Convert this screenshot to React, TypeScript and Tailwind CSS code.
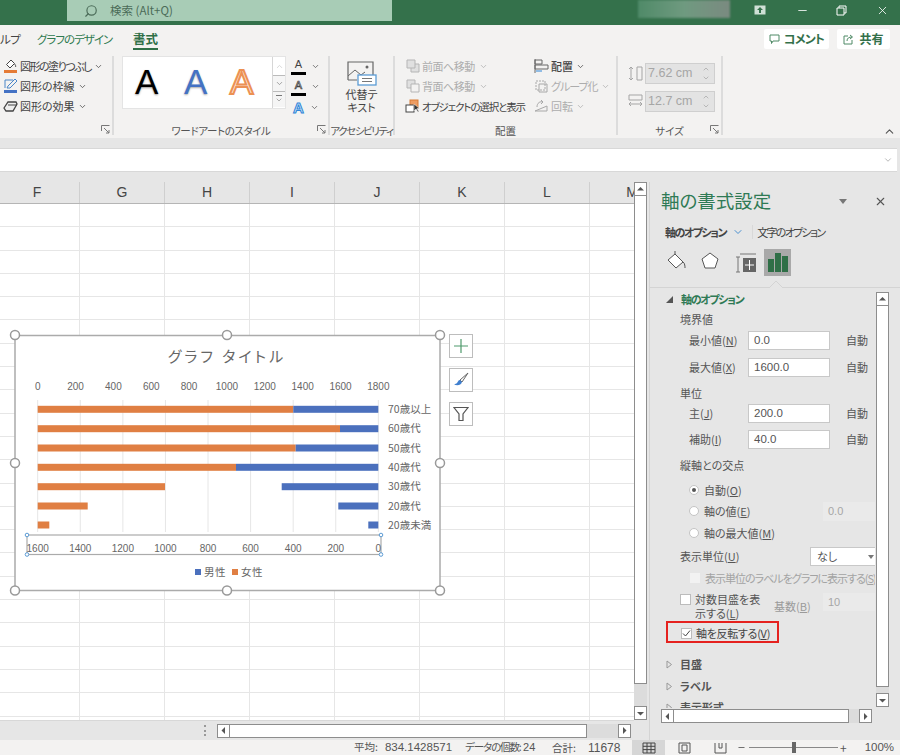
import type { ReactNode } from 'react';
import { ChevronDown, ChevronUp, Minus, Search, X } from 'lucide-react';

const columns = ['F', 'G', 'H', 'I', 'J', 'K', 'L', 'M'];
const rows = Array.from({ length: 23 }, (_, i) => i);

const bars = [
  { label: '70歳以上', y: 409.3, orange: 293.3, blue: 293.3 },
  { label: '60歳代', y: 428.7, orange: 340, blue: 340 },
  { label: '50歳代', y: 448, orange: 295.7, blue: 295.7 },
  { label: '40歳代', y: 467.3, orange: 236, blue: 236 },
  { label: '30歳代', y: 486.7, orange: 165, blue: 281.7 },
  { label: '20歳代', y: 506, orange: 87.7, blue: 338.3 },
  { label: '20歳未満', y: 525, orange: 49.3, blue: 368.3 },
];

function Caret({ className = 'text-[#555]' }: { className?: string }) {
  return <ChevronDown size={9} strokeWidth={2} className={`shrink-0 ${className}`} />;
}

function Launcher() {
  return (
    <svg width="9" height="9" viewBox="0 0 9 9" className="absolute right-[2px] bottom-[1px]" fill="none" stroke="#777">
      <path d="M.5 6V.5H8.5M3 3l5 5M8 5v3H5" />
    </svg>
  );
}

function RibbonRow({ icon, children, muted, caret }: { icon: ReactNode; children: ReactNode; muted?: boolean; caret?: boolean }) {
  return (
    <div className={`flex h-[20px] items-center gap-[2px] whitespace-nowrap ${muted ? 'text-[#adadad]' : 'text-[#444]'}`}>
      <span className="flex w-[15px] shrink-0 justify-center">{icon}</span>
      <span>{children}</span>
      {caret && <Caret className={muted ? 'text-[#adadad] ml-[1px]' : 'text-[#444] ml-[1px]'} />}
    </div>
  );
}

function GroupLabel({ children }: { children: ReactNode }) {
  return <div className="absolute inset-x-0 bottom-[-3px] text-center text-[10.5px] leading-[14px] whitespace-nowrap text-[#555]">{children}</div>;
}

function AngleUpDown() {
  return (
    <span className="flex flex-col text-[#a0a0a0]">
      <ChevronUp size={8} />
      <ChevronDown size={8} className="mt-[1px]" />
    </span>
  );
}

function SizeField({ value, icon }: { value: string; icon: ReactNode }) {
  return (
    <div className="flex items-center gap-[2px]">
      <span className="flex w-[16px] justify-center">{icon}</span>
      <div className="flex h-[21px] w-[70px] items-center justify-between border border-[#cfcfcf] bg-[#e3e3e3] pl-[2px] pr-[4px] font-['Liberation_Sans',sans-serif] text-[12.5px] text-[#a6a6a6]">
        {value}
        <AngleUpDown />
      </div>
    </div>
  );
}

function Ribbon() {
  return (
    <div className="relative h-[113px] shrink-0 bg-[#f3f2f1] text-[11px]">
      <div className="flex h-[25px] items-end text-[11.5px]">
        <span className="w-[37px] pb-[2px] tracking-[-0.5px] text-[#444]">ルプ</span>
        <span className="w-[96px] pb-[2px] tracking-[-1px] text-[#2f7a50]">グラフのデザイン</span>
        <span className="border-b-[2px] border-[#2f6f47] text-[12.5px] leading-[19px] font-bold text-[#2f6f47]">書式</span>
      </div>
      <div className="absolute top-[4px] right-[10px] flex gap-[8px] text-[12px] font-bold text-[#33704a]">
        <div className="flex h-[20px] w-[65px] items-center justify-center gap-[4px] rounded-[2px] bg-white tracking-[-0.8px]">
          <svg width="11" height="11" viewBox="0 0 11 11" fill="none" stroke="#4f8a66"><path d="M1 1h9v6H4L2.500 9.500V7H1z" /></svg>
          コメント
        </div>
        <div className="flex h-[20px] w-[53px] items-center justify-center gap-[5px] rounded-[2px] bg-white">
          <svg width="11" height="11" viewBox="0 0 11 11" fill="none" stroke="#4f8a66"><path d="M5 2H1v8h8V6M4 7c0-3 2-4 5-4M7 1l2.500 2L7 5" /></svg>
          共有
        </div>
      </div>

      <div className="mt-[6px] flex h-[79px] items-stretch">
        <div className="relative w-[114px] shrink-0 border-r-[2px] border-[#dcdcdc] pl-[3px]">
          <RibbonRow caret icon={<svg width="15" height="15" viewBox="0 0 15 15"><path d="M8 1l3.500 3.500L7 9 3.500 5.500z" fill="#fff" stroke="#444" /><path d="M11.500 5c1 1 1.500 2 1 3" fill="none" stroke="#444" /><rect x="1" y="11" width="13" height="3" fill="#e57b35" /></svg>}><span className="tracking-[-1.500px]">図形の塗りつぶし</span></RibbonRow>
          <RibbonRow caret icon={<svg width="15" height="16" viewBox="0 0 15 16"><path d="M2 10V2h8M4 10l1-2 7-7 2 2-7 7z" fill="none" stroke="#4a86c8" /><rect x="1" y="12" width="13" height="3" fill="#4472c4" /></svg>}>図形の枠線</RibbonRow>
          <RibbonRow caret icon={<svg width="15" height="13" viewBox="0 0 15 13"><path d="M1 8l4-6h8l1 2-4 7H3z" fill="#eee" stroke="#444" strokeWidth="1.300" /><path d="M5 5h9" stroke="#444" /></svg>}>図形の効果</RibbonRow>
          <Launcher />
        </div>

        <div className="relative w-[216px] shrink-0 border-r-[2px] border-[#dcdcdc]">
          <div className="ml-[8px] flex h-[53px] w-[164px] border-[1.5px] border-[#e4e4e4] bg-white font-['Liberation_Sans',sans-serif] text-[35px] leading-[50px]">
            <span className="w-[50px] pl-[12px] text-black [text-shadow:0_1px_2px_#999]">A</span>
            <span className="w-[49px] pl-[11px] text-[#4472c4] [text-shadow:0_1px_2px_#aaa]">A</span>
            <span className="w-[50px] pl-[8px] text-[#fbe5d6] [-webkit-text-stroke:2px_#ec9153]">A</span>
            <div className="flex w-[13px] flex-col border-l border-[#d6d6d6] text-[#888]">
              <div className="flex h-[18px] items-center justify-center"><ChevronUp size={9} className="text-[#ccc]" /></div>
              <div className="flex h-[17px] items-center justify-center border-y border-[#bbb] bg-[#f5f5f5]"><ChevronDown size={9} /></div>
              <div className="flex h-[15px] flex-col items-center justify-center bg-[#f5f5f5]"><span className="h-[1px] w-[6px] bg-[#777]" /><ChevronDown size={8} /></div>
            </div>
          </div>
          <div className="absolute top-[0px] left-[177px] flex flex-col font-['Liberation_Sans',sans-serif] text-[11px] leading-[15px]">
            <div className="flex h-[20px] items-center gap-[5px]"><span className="w-[15px] border-b-[3px] border-black text-center text-[#444]">A</span><Caret /></div>
            <div className="flex h-[21px] items-center gap-[5px]"><span className="w-[15px] border-b-[3px] border-black text-center text-[#eee] [-webkit-text-stroke:0.700px_#444]">A</span><Caret /></div>
            <div className="flex h-[20px] items-center gap-[4px]"><span className="w-[15px] text-center text-[15px] font-bold text-[#cfe4f7] [-webkit-text-stroke:1px_#2f86d8]">A</span><Caret /></div>
          </div>
          <GroupLabel><span className="tracking-[-0.4px]">ワードアートのスタイル</span></GroupLabel>
          <Launcher />
        </div>

        <div className="relative w-[65px] shrink-0 border-r-[2px] border-[#dcdcdc] text-center leading-[13px] text-[#444]">
          <svg width="30" height="25" viewBox="0 0 30 25" className="mx-auto mt-[5px] mb-[2px]" fill="none">
            <path d="M1 19V1h25v13" stroke="#666" strokeWidth="1.200" />
            <path d="M1 15l7-6 6 5 4-3M1 19h9" stroke="#666" />
            <circle cx="20" cy="6" r="1.500" fill="#666" />
            <rect x="11" y="14" width="18" height="10" fill="#fff" stroke="#5b9bd5" strokeWidth="1.300" />
            <path d="M15 17.500h10M15 20.500h10" stroke="#777" />
          </svg>
          <div>代替テ</div>
          <div>キスト</div>
          <GroupLabel><span className="tracking-[-1.400px]">アクセシビリティ</span></GroupLabel>
        </div>

        <div className="relative flex w-[223px] shrink-0 border-r-[2px] border-[#dcdcdc] pl-[10px]">
          <div className="w-[129px]">
            <RibbonRow muted caret icon={<svg width="14" height="14" viewBox="0 0 14 14" fill="#e0e0e0" stroke="#b5b5b5"><path d="M5 5h8v8H5z" /><path d="M1 1h8v8H1z" /></svg>}><span className="mr-[1px] tracking-[-0.5px]">前面へ移動</span></RibbonRow>
            <RibbonRow muted caret icon={<svg width="14" height="14" viewBox="0 0 14 14" fill="#e0e0e0" stroke="#b5b5b5"><path d="M1 1h8v8H1z" /><path d="M5 5h8v8H5z" fill="#f3f2f1" /></svg>}><span className="mr-[1px] tracking-[-0.5px]">背面へ移動</span></RibbonRow>
            <RibbonRow icon={<svg width="15" height="14" viewBox="0 0 15 14"><rect x="5" y="1" width="8" height="8" fill="#ed9c62" stroke="#d97c36" /><rect x="1" y="6" width="8" height="7" fill="#fff" stroke="#444" /><path d="M9 5v7l2-2 2 3 1-.5-2-3h2.500z" fill="#333" stroke="#fff" strokeWidth=".5" /></svg>}><span className="text-[10.5px] tracking-[-1.150px]">オブジェクトの選択と表示</span></RibbonRow>
          </div>
          <div>
            <RibbonRow caret icon={<svg width="15" height="16" viewBox="0 0 15 16" fill="none" stroke="#666"><path d="M1 1v14" /><path d="M1 2h7v4H1zM1 7h13v4H1z" /><path d="M2 13h6" stroke="#2f86d8" /></svg>}><span className="font-medium">配置</span></RibbonRow>
            <RibbonRow muted caret icon={<svg width="15" height="15" viewBox="0 0 15 15" fill="none" stroke="#a8a8a8"><path d="M2 2h9v9H2z" strokeDasharray="2 1" /><path d="M5 5h8v8H5z" /></svg>}><span className="tracking-[-1px]">グループ化</span></RibbonRow>
            <RibbonRow muted caret icon={<svg width="15" height="14" viewBox="0 0 15 14" fill="none" stroke="#a8a8a8"><path d="M1 12l12-5v5zM3 8c0-4 3-6 6-5M7 1l2 2-2 2" /></svg>}>回転</RibbonRow>
          </div>
          <GroupLabel>配置</GroupLabel>
        </div>

        <div className="relative flex w-[105px] shrink-0 flex-col gap-[7px] border-r-[2px] border-[#dcdcdc] pt-[7px] pl-[9px]">
          <SizeField value="7.62 cm" icon={<svg width="15" height="15" viewBox="0 0 15 15" fill="none" stroke="#a5a5a5"><path d="M9 1h5v13H9zM3 1v13M1 3l2-2 2 2M1 12l2 2 2-2" /></svg>} />
          <SizeField value="12.7 cm" icon={<svg width="15" height="15" viewBox="0 0 15 15" fill="none" stroke="#a5a5a5"><path d="M1 1h13v5H1zM1 10h13M3 8l-2 2 2 2M12 8l2 2-2 2" /></svg>} />
          <GroupLabel>サイズ</GroupLabel>
          <Launcher />
        </div>
      </div>
      <ChevronUp size={13} className="absolute right-[4px] bottom-[0px] text-[#555]" />
    </div>
  );
}

function Sheet() {
  return (
    <div className="relative flex w-[634px] shrink-0 flex-col overflow-hidden">
      <div className="ml-[-5px] flex h-[22px] shrink-0 border-b border-[#b5b5b5] bg-[#e6e6e6] font-['Liberation_Sans',sans-serif] text-[14px] text-[#444]">
        {columns.map((c) => (
          <div key={c} className="flex w-[85px] shrink-0 items-center justify-center border-r border-[#cfcfcf]">
            {c}
          </div>
        ))}
      </div>
      <div className="h-[516px] shrink-0 overflow-hidden bg-white">
        {rows.map((r) => (
          <div key={r} className="ml-[-5px] flex h-[23.300px]">
            {columns.map((c) => (
              <div key={c} className="w-[85px] shrink-0 border-r border-b border-[#e6e6e6]" />
            ))}
          </div>
        ))}
      </div>
      <div className="flex h-[20px] shrink-0 items-center border-t border-[#d8d8d8] bg-[#e6e6e6]">
        <span className="ml-[204px] h-[11px] w-[2px] border-l-2 border-dotted border-[#999]" />
        <ArrowBox dir="left" className="ml-[11px]" />
        <div className="h-[14px] w-[357px] border-y border-r border-[#8d8d8d] bg-white" />
        <div className="h-[14px] w-[31px] bg-[#dcdcdc]" />
        <ArrowBox dir="right" />
      </div>
      <Chart />
    </div>
  );
}

function ArrowBox({ dir, className = '' }: { dir: 'up' | 'down' | 'left' | 'right'; className?: string }) {
  const path = { up: 'M1 5.500L4.500 2 8 5.500z', down: 'M1 3L4.500 6.500 8 3z', left: 'M6 1L2.500 4.500 6 8z', right: 'M3 1l3.500 3.500L3 8z' }[dir];
  return (
    <span className={`flex h-[14px] w-[13px] shrink-0 items-center justify-center border border-[#8d8d8d] bg-white ${className}`}>
      <svg width="9" height="9" viewBox="0 0 9 9"><path d={path} fill="#555" /></svg>
    </span>
  );
}

function Chart() {
  const gridXs = Array.from({ length: 9 }, (_, i) => 37.7 + i * 42.58);
  const topTicks = Array.from({ length: 10 }, (_, i) => i * 200);
  const handles = [[15, 335], [227, 335], [440, 335], [15, 463], [440, 463], [15, 590.500], [227, 590.500], [440, 590.500]];
  const blueHandles = [[27, 535], [381, 535], [27, 554.500], [381, 554.500]];
  return (
    <>
      <svg
        width="445"
        height="272"
        viewBox="5 327 445 272"
        className="absolute top-[145px] left-[5px] font-['Noto_Sans_CJK_JP',sans-serif]"
      >
        <rect x="15" y="335.500" width="425" height="255" fill="#fff" stroke="#ababab" strokeWidth="1.500" />
        <text x="227" y="362" textAnchor="middle" fontSize="15" letterSpacing="3" fill="#666">グラフ タイトル</text>
        {gridXs.map((x) => (
          <line key={x} x1={x} x2={x} y1="400" y2="532" stroke="#e6e6e6" />
        ))}
        {topTicks.map((t, i) => (
          <text key={t} x={37.7 + i * 37.85} y="389.500" textAnchor="middle" fontSize="10" fill="#666" fontFamily="'Liberation Sans',sans-serif">{t}</text>
        ))}
        {bars.map((b) => (
          <g key={b.label}>
            <rect x="37.700" y={b.y - 3.5} width={b.orange - 37.7} height="7" fill="#e07f43" />
            <rect x={b.blue} y={b.y - 3.5} width={378.3 - b.blue} height="7" fill="#4b70bd" />
            <text x="388" y={b.y + 3.5} fontSize="10.500" fill="#666" style={{ fontFeatureSettings: "'palt'" }}>{b.label}</text>
          </g>
        ))}
        <rect x="27" y="535" width="354" height="19.500" fill="none" stroke="#ababab" strokeWidth="1.200" />
        {[1600, 1400, 1200, 1000, 800, 600, 400, 200, 0].map((t, i) => (
          <text key={t} x={37.7 + i * 42.58} y="551.500" textAnchor="middle" fontSize="10" fill="#666" fontFamily="'Liberation Sans',sans-serif">{t}</text>
        ))}
        {blueHandles.map(([x, y]) => (
          <circle key={`${x}-${y}`} cx={x} cy={y} r="1.800" fill="#fff" stroke="#5b9bd5" />
        ))}
        <rect x="195" y="569" width="6" height="6" fill="#4b70bd" />
        <text x="204" y="576" fontSize="10.500" letterSpacing=".4" fill="#666">男性</text>
        <rect x="232" y="569" width="6" height="6" fill="#e07f43" />
        <text x="241" y="576" fontSize="10.500" letterSpacing=".4" fill="#666">女性</text>
        {handles.map(([x, y]) => (
          <circle key={`${x}-${y}`} cx={x} cy={y} r="4.500" fill="#fff" stroke="#999" strokeWidth="1.500" />
        ))}
      </svg>
      <div className="absolute top-[152px] left-[449px] flex flex-col gap-[10px]">
        <div className="flex h-[24px] w-[24px] items-center justify-center border border-[#bdbdbd] bg-white">
          <svg width="16" height="16" viewBox="0 0 16 16" stroke="#4f9a6c" strokeWidth="1.200"><path d="M8 1v14M1 8h14" /></svg>
        </div>
        <div className="flex h-[24px] w-[24px] items-center justify-center border border-[#bdbdbd] bg-white">
          <svg width="16" height="16" viewBox="0 0 16 16"><path d="M15 1L7 8l2 2z" fill="#fff" stroke="#666" /><path d="M7 8c-2 0-2 2-3 3-.5.6-2 1-3 1.500 3 1.500 7 1 8-2.500z" fill="#3f7fcf" /></svg>
        </div>
        <div className="flex h-[24px] w-[24px] items-center justify-center border border-[#bdbdbd] bg-white">
          <svg width="16" height="16" viewBox="0 0 16 16" fill="none" stroke="#555" strokeWidth="1.200"><path d="M1 1.500h14L10 8v6.500H6V8z" /></svg>
        </div>
      </div>
    </>
  );
}

function Field({ label, value, mt }: { label: ReactNode; value: string; mt: string }) {
  return (
    <div className={`flex h-[19px] items-center ${mt}`}>
      <span className="w-[60px] pl-[1px]">{label}</span>
      <span className="flex h-[19px] w-[82px] items-center border border-[#c8c8c8] bg-white pl-[5px] font-['Liberation_Sans',sans-serif] text-[11.500px]">{value}</span>
      <span className="ml-[16px] text-[11px]">自動</span>
    </div>
  );
}

function Radio({ checked, children, mt }: { checked?: boolean; children: ReactNode; mt: string }) {
  return (
    <div className={`flex h-[20px] w-[100px] shrink-0 items-center gap-[5px] whitespace-nowrap pl-[9px] ${mt}`}>
      <span className="flex h-[10px] w-[10px] shrink-0 items-center justify-center rounded-full border border-[#c4c4c4] bg-white">
        {checked && <span className="h-[4px] w-[4px] rounded-full bg-[#555]" />}
      </span>
      <span>{children}</span>
    </div>
  );
}

function Collapsed({ children, mt }: { children: ReactNode; mt: string }) {
  return (
    <div className={`ml-[-14px] flex h-[20px] items-center gap-[7px] font-bold text-[#555] ${mt}`}>
      <svg width="7" height="9" viewBox="0 0 7 9" fill="none" stroke="#999"><path d="M1 1l4.500 3.500L1 8z" /></svg>
      {children}
    </div>
  );
}

function Panel() {
  return (
    <div className="ml-[2px] flex w-[251px] shrink-0 flex-col overflow-hidden border-l border-[#d4d4d4] bg-[#e6e6e6] text-[11px] text-[#555]">
      <div className="mt-[7px] flex h-[24px] shrink-0 items-center pr-[13px] pl-[11px]">
        <span className="flex-1 text-[18.500px] text-[#2f7a55]">軸の書式設定</span>
        <svg width="8" height="5" viewBox="0 0 8 5" className="mr-[27px]"><path d="M0 0h8L4 5z" fill="#777" /></svg>
        <X size={13} className="text-[#555]" />
      </div>
      <div className="mt-[9px] flex h-[20px] shrink-0 items-center pl-[15px] tracking-[-1.500px]">
        <span className="font-bold text-[#444]">軸のオプション</span>
        <ChevronDown size={12} className="ml-[6px] text-[#4a90d0]" />
        <span className="ml-[8px] h-[14px] border-l border-[#d8d8d8]" />
        <span className="ml-[4px] tracking-[-1.700px] text-[#444]">文字のオプション</span>
      </div>
      <div className="relative mt-[7px] flex h-[39px] shrink-0 items-start border-b border-[#d4d4d4] pl-[14px]">
        <svg width="24" height="24" viewBox="0 0 24 24" className="mt-[1px]" fill="#fff" stroke="#555"><path d="M11 4l8 8-7 6-8-8z" /><path d="M11 4V1M19 12c2 1 2 5 2 6" fill="none" /></svg>
        <svg width="22" height="22" viewBox="0 0 22 22" className="ml-[11px] mt-[2px]" fill="#fff" stroke="#555"><path d="M11 2l8 6-3 9H6L3 8z" /></svg>
        <svg width="22" height="22" viewBox="0 0 22 22" className="ml-[14px] mt-[2px]" fill="none" stroke="#777"><path d="M5 3h16M1 6h4M3 6v15M1 21h4" /><rect x="8" y="7" width="13" height="14" fill="#666" stroke="none" /><path d="M14.500 9v10M10 14h9" stroke="#fff" /></svg>
        <div className="ml-[7px] flex h-[27px] w-[27px] items-end justify-center gap-[1px] bg-[#a9a9a9] pb-[4px]">
          <span className="h-[13px] w-[6px] bg-[#2f6f47]" />
          <span className="h-[19px] w-[6px] bg-[#2f6f47]" />
          <span className="h-[16px] w-[6px] bg-[#2f6f47]" />
        </div>
        <svg width="14" height="8" viewBox="0 0 14 8" className="absolute right-[117px] bottom-[-1px]"><path d="M0 8l7-7 7 7" fill="#e6e6e6" stroke="#d4d4d4" /></svg>
      </div>

      <div className="relative mt-[1px] h-[419px] shrink-0 overflow-hidden">
        <div className="absolute top-[3px] right-[11px] flex h-[415px] w-[13px] flex-col">
          <ArrowBox dir="up" />
          <div className="w-[13px] flex-1 border-x border-b border-[#8d8d8d] bg-white" />
          <div className="h-[6px] bg-[#dcdcdc]" />
          <ArrowBox dir="down" />
        </div>
        <div className="w-[225px] overflow-hidden pl-[30px]">
          <div className="ml-[-14px] flex h-[20px] items-center gap-[8px] font-bold tracking-[-1.300px] text-[#2f7a55]">
            <svg width="7" height="7" viewBox="0 0 7 7"><path d="M7 0v7H0z" fill="#555" /></svg>
            軸のオプション
          </div>
          <div className="flex h-[20px] items-center">境界値</div>
          <div className="pl-[8px]">
            <Field mt="mt-[2px]" label={<>最小値(<span className="underline">N</span>)</>} value="0.0" />
            <Field mt="mt-[8px]" label={<>最大値(<span className="underline">X</span>)</>} value="1600.0" />
          </div>
          <div className="mt-[6px] flex h-[20px] items-center">単位</div>
          <div className="pl-[8px]">
            <Field mt="mt-[1px]" label={<>主(<span className="underline">J</span>)</>} value="200.0" />
            <Field mt="mt-[7px]" label={<>補助(<span className="underline">I</span>)</>} value="40.0" />
          </div>
          <div className="mt-[6px] flex h-[20px] items-center">縦軸との交点</div>
          <Radio checked mt="mt-[5px]">自動(<span className="underline">O</span>)</Radio>
          <div className="flex">
            <Radio mt="mt-[1px]">軸の値(<span className="underline">E</span>)</Radio>
            <span className="mt-[2px] ml-[43px] flex h-[19px] w-[60px] shrink-0 items-center bg-[#eaeaea] pl-[5px] font-['Liberation_Sans',sans-serif] text-[#a6a6a6]">0.0</span>
          </div>
          <Radio mt="mt-[2px]">軸の最大値(<span className="underline">M</span>)</Radio>
          <div className="mt-[4px] flex h-[19px] items-center">
            <span className="w-[130px] shrink-0">表示単位(<span className="underline">U</span>)</span>
            <span className="flex h-[19px] w-[66px] shrink-0 items-center justify-between border border-[#c8c8c8] bg-white pl-[6px] pr-[1px]">なし<svg width="6" height="4" viewBox="0 0 6 4"><path d="M0 0h6L3 4z" fill="#777" /></svg></span>
          </div>
          <div className="mt-[2px] flex h-[20px] items-center gap-[5px] whitespace-nowrap pl-[10px] text-[#a3a3a3]">
            <span className="h-[10px] w-[10px] shrink-0 bg-[#f2f2f2]" />
            <span className="tracking-[-1px]">表示単位のラベルをグラフに表示する(<span className="underline">S</span>)</span>
          </div>
          <div className="mt-[5px] flex h-[27px]">
            <span className="mt-[1px] h-[11px] w-[11px] shrink-0 border border-[#bcbcbc] bg-white" />
            <span className="ml-[4px] w-[68px] shrink-0 leading-[13.500px]">対数目盛を表示する(<span className="underline">L</span>)</span>
            <span className="mt-[5px] ml-[11px] w-[49px] shrink-0 text-[#9a9a9a]">基数(<span className="underline">B</span>)</span>
            <span className="flex h-[18px] w-[52px] shrink-0 items-center bg-[#eaeaea] pl-[5px] font-['Liberation_Sans',sans-serif] text-[#a6a6a6]">10</span>
          </div>
          <div className="relative mt-[1px] ml-[-14px] flex h-[22px] w-[113px] items-center gap-[4px] border-2 border-[#e5221f] pt-[3px] pl-[13px]">
            <span className="flex h-[11px] w-[11px] shrink-0 items-center justify-center border border-[#bcbcbc] bg-white">
              <svg width="9" height="9" viewBox="0 0 9 9" fill="none" stroke="#444"><path d="M1 4.500l2.500 2.500L8 1.500" /></svg>
            </span>
            <span className="whitespace-nowrap tracking-[-0.3px] text-[#444]">軸を反転する(<span className="underline">V</span>)</span>
          </div>
          <Collapsed mt="mt-[11px]">目盛</Collapsed>
          <Collapsed mt="mt-[2px]">ラベル</Collapsed>
          <Collapsed mt="mt-[1px]">表示形式</Collapsed>
        </div>
      </div>
      <div className="mt-[1px] ml-[11px] flex h-[14px] w-[211px] shrink-0">
        <ArrowBox dir="left" />
        <div className="h-[14px] w-[175px] border-y border-r border-[#8d8d8d] bg-white" />
        <div className="h-[14px] w-[10px] bg-[#dcdcdc]" />
        <ArrowBox dir="right" />
      </div>
    </div>
  );
}

function StatusBar() {
  return (
    <div className="flex h-[15px] shrink-0 items-center bg-[#f3f2f1] text-[10.500px] whitespace-nowrap text-[#555]">
      <span className="ml-[354px] w-[111px]">平均:<span className="ml-[7px] font-['Liberation_Sans',sans-serif] text-[11.500px]">834.1428571</span></span>
      <span className="w-[87px]"><span className="tracking-[-1.100px]">データの個数:</span> <span className="font-['Liberation_Sans',sans-serif] text-[11px]">24</span></span>
      <span className="w-[80px]">合計:<span className="ml-[12px] font-['Liberation_Sans',sans-serif] text-[12px]">11678</span></span>
      <div className="flex h-[15px] w-[33px] items-center justify-center bg-[#d6d6d6]">
        <svg width="14" height="12" viewBox="0 0 14 12" fill="none" stroke="#444"><path d="M1 1h12v10H1zM1 4.300h12M1 7.600h12M5 1v10M9 1v10" /></svg>
      </div>
      <svg width="13" height="12" viewBox="0 0 13 12" fill="none" stroke="#555" className="ml-[13px]"><path d="M1 1h11v10H1zM4 3h5v6H4z" /></svg>
      <svg width="13" height="12" viewBox="0 0 13 12" fill="none" stroke="#555" className="ml-[23px]"><path d="M1 1v10h11V1M5 1v5h3V1" /></svg>
      <Minus size={9} className="ml-[10px] text-[#444]" />
      <div className="relative ml-[3px] h-[1px] w-[89px] bg-[#888]">
        <span className="absolute top-[-5px] left-[43px] h-[11px] w-[4px] bg-[#666]" />
      </div>
      <span className="ml-[2px] text-[12px]">+</span>
      <span className="ml-[18px] font-['Liberation_Sans',sans-serif] text-[11.500px]">100%</span>
    </div>
  );
}

export default function App() {
  return (
    <div className="flex h-[755px] w-[900px] flex-col overflow-hidden bg-[#e6e6e6] font-['Noto_Sans_CJK_JP','Noto_Sans',sans-serif] [font-feature-settings:'palt']">
      <div className="relative flex h-[25px] shrink-0 items-start bg-[#34714b]">
        <div className="ml-[67px] flex h-[21px] w-[325px] items-center bg-[#a8ccb6] pl-[17px] text-[11.5px] text-[#4b6b58]">
          <Search size={14} className="scale-x-[-1]" />
          <span className="ml-[12px]">検索 (Alt+Q)</span>
        </div>
        <div className="ml-[246px] h-[18px] w-[92px] bg-gradient-to-r from-[#4f8a68] via-[#6f9a80] to-[#7a8a80] blur-[1px]" />
        <div className="absolute top-0 right-[11px] flex h-[20px] items-center text-white">
          <svg width="12" height="10" viewBox="0 0 12 10" className="mr-[30px]"><rect x=".5" y=".5" width="11" height="9" fill="#cfe0d6" /><path d="M6 2l3 3H7v3H5V5H3z" fill="#34714b" /></svg>
          <Minus size={13} strokeWidth={1.500} className="mr-[27px]" />
          <svg width="11" height="11" viewBox="0 0 11 11" fill="none" stroke="#fff" className="mr-[29px]"><path d="M3 3V1h7v7H8M1 3h7v7H1z" /></svg>
          <X size={13} strokeWidth={1.500} />
        </div>
      </div>
      <Ribbon />
      <div className="mt-[10px] mr-[3px] flex h-[24px] shrink-0 items-center justify-end border-y border-[#d8d8d8] bg-white pr-[4px]">
        <ChevronDown size={10} className="text-[#aaa]" />
      </div>
      <div className="mt-[10px] flex h-[558px] shrink-0">
        <Sheet />
        <div className="flex h-[538px] w-[13px] shrink-0 flex-col">
          <ArrowBox dir="up" />
          <div className="h-[488px] border-x border-b border-[#8d8d8d] bg-white" />
          <div className="flex-1 bg-[#dcdcdc]" />
          <ArrowBox dir="down" />
        </div>
        <Panel />
      </div>
      <StatusBar />
    </div>
  );
}
